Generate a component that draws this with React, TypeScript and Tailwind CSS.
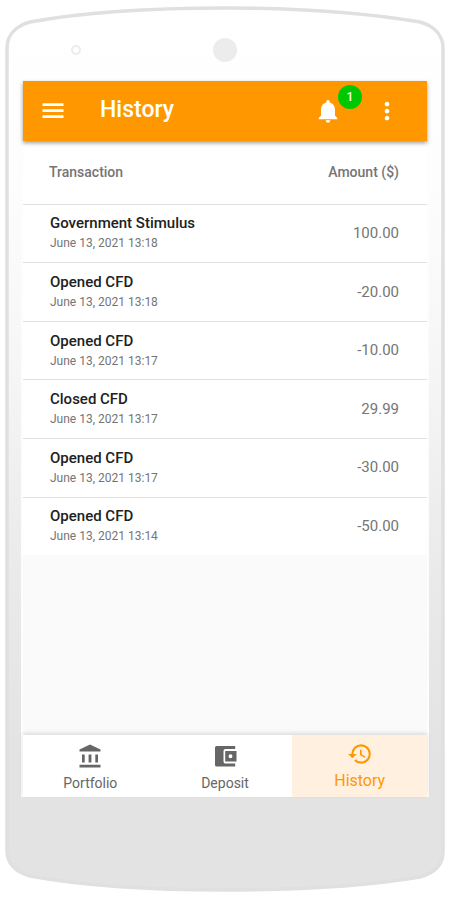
import type { ReactNode } from "react";
import { MdHistory, MdMoreVert, MdNotifications } from "react-icons/md";

type Transaction = {
  title: string;
  date: string;
  amount: string;
};

const transactions: Transaction[] = [
  { title: "Government Stimulus", date: "June 13, 2021 13:18", amount: "100.00" },
  { title: "Opened CFD", date: "June 13, 2021 13:18", amount: "-20.00" },
  { title: "Opened CFD", date: "June 13, 2021 13:17", amount: "-10.00" },
  { title: "Closed CFD", date: "June 13, 2021 13:17", amount: "29.99" },
  { title: "Opened CFD", date: "June 13, 2021 13:17", amount: "-30.00" },
  { title: "Opened CFD", date: "June 13, 2021 13:14", amount: "-50.00" },
];

function MenuIcon() {
  return (
    <svg width="28" height="28" viewBox="0 0 28 28" fill="currentColor" aria-hidden="true">
      <path d="M3.500 6.300h21v2.700h-21zM3.500 12.300h21v2.700h-21zM3.500 18.300h21v2.700h-21z" />
    </svg>
  );
}

function BankIcon() {
  return (
    <svg width="26" height="26" viewBox="0 0 26 26" fill="currentColor" aria-hidden="true">
      <path d="M13 1.500L2.500 6.500V8.500H23.500V6.500zM5 11.500h2.700v8H5zM11.600 11.500h2.800v8h-2.800zM18.300 11.500H21v8h-2.700zM2.500 21.700h21v2.800h-21z" />
    </svg>
  );
}

function DepositIcon() {
  return (
    <svg width="26" height="26" viewBox="0 0 26 26" fill="currentColor" aria-hidden="true">
      <path d="M4.500 3h18.700v3H13.500a2 2 0 0 0-2 2v10.500a2 2 0 0 0 2 2h9.700v3H4.500a1.500 1.500 0 0 1-1.500-1.500V4.500A1.500 1.500 0 0 1 4.500 3z" />
      <path
        fillRule="evenodd"
        d="M13.200 8h11.300v10.500H13.200zM18.500 11.300a1.950 1.950 0 1 0 0 3.900 1.950 1.950 0 0 0 0-3.900z"
      />
    </svg>
  );
}

// Outline of the handset, stretched behind the content
function PhoneShell() {
  return (
    <svg
      className="absolute inset-0 -z-10 h-full w-full"
      viewBox="0 0 450 900"
      preserveAspectRatio="none"
      aria-hidden="true"
    >
      <defs>
        <linearGradient id="shell" x1="0" y1="0" x2="0" y2="1">
          <stop offset="0" stopColor="#ffffff" />
          <stop offset="0.2" stopColor="#fdfdfd" />
          <stop offset="0.4" stopColor="#f6f6f6" />
          <stop offset="0.62" stopColor="#ebebeb" />
          <stop offset="0.85" stopColor="#e3e3e3" />
          <stop offset="1" stopColor="#e3e3e3" />
        </linearGradient>
      </defs>
      <path
        d="M7 48C7 35 16 26 30 22C90 11 155 8 225 8C295 8 360 12 420 22C434 26 443 35 443 48V852C443 865 434 873 420 877C360 887 295 890 225 890C155 890 90 887 30 876C16 872 7 864 7 850Z"
        fill="url(#shell)"
        stroke="#dee0e1"
        strokeWidth="3.500"
      />
    </svg>
  );
}

function NavItem({ icon, label, active }: { icon: ReactNode; label: string; active?: boolean }) {
  return (
    <a
      href="#"
      aria-current={active ? "page" : undefined}
      className={
        active
          ? "flex flex-1 flex-col items-center gap-0.5 bg-[#fff0e0] pt-1.5 text-base leading-6 text-[#ff9800]"
          : "flex flex-1 flex-col items-center gap-0.5 pt-2 text-sm leading-6 text-[#666666]"
      }
    >
      {icon}
      <span>{label}</span>
    </a>
  );
}

export default function App() {
  return (
    <div className="relative isolate flex min-h-screen flex-col bg-white font-['Roboto',sans-serif]">
      <PhoneShell />

      <div className="grid h-20 grid-cols-[1fr_auto_1fr] items-center pt-5">
        <span className="ml-[71px] h-2.5 w-2.5 rounded-full border-2 border-[#ececec]" />
        <span className="h-6 w-6 rounded-full bg-[#ececec]" />
      </div>

      <div className="mx-[21px] mb-[103px] flex flex-1 flex-col border-x-2 border-t border-[#fdfdfd] bg-[#fafafa]">
        <header className="z-10 flex h-[60px] items-center bg-[#ff9800] pr-[26px] pb-px pl-4 text-white shadow-[0_2px_4px_rgba(0,0,0,0.4)]">
          <button type="button" aria-label="Menu">
            <MenuIcon />
          </button>
          <h1 className="ml-[33px] flex-1 text-[23px] font-medium">History</h1>
          <button type="button" aria-label="Notifications" className="relative mr-[31px]">
            <MdNotifications size={28} />
            <span className="absolute -top-3 left-6 flex h-6 w-6 items-center justify-center rounded-full bg-[#00c800] text-xs font-medium">
              1
            </span>
          </button>
          <button type="button" aria-label="More options">
            <MdMoreVert size={28} />
          </button>
        </header>

        <table className="h-[414px] w-full bg-white text-[#757575]">
          <thead>
            <tr className="h-[63px] text-sm">
              <th className="pl-[26px] text-left font-medium">Transaction</th>
              <th className="pr-7 text-right font-medium">Amount ($)</th>
            </tr>
          </thead>
          <tbody>
            {transactions.map((item, index) => (
              <tr key={index} className="border-t border-[#e0e0e0]">
                <td className="pl-[27px]">
                  <p className="text-[15px] leading-5 font-medium text-[#212121]">{item.title}</p>
                  <p className="text-xs leading-5">{item.date}</p>
                </td>
                <td className="pr-7 text-right text-[15px]">{item.amount}</td>
              </tr>
            ))}
          </tbody>
        </table>

        <div className="flex-1" />

        <nav className="flex h-[62px] bg-white shadow-[0_-2px_4px_rgba(0,0,0,0.12)]">
          <NavItem icon={<BankIcon />} label="Portfolio" />
          <NavItem icon={<DepositIcon />} label="Deposit" />
          <NavItem icon={<MdHistory size={26} />} label="History" active />
        </nav>
      </div>
    </div>
  );
}
